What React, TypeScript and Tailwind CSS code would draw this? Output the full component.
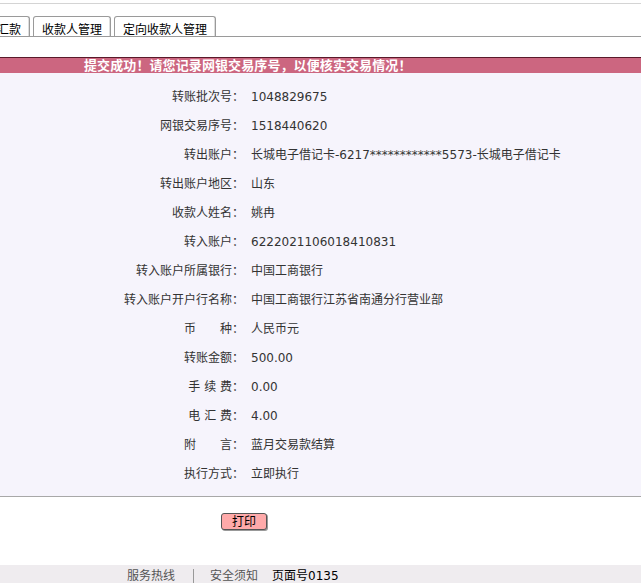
import React from 'react';

const rows: { label: string; value: string }[] = [
  { label: '转账批次号：', value: '1048829675' },
  { label: '网银交易序号：', value: '1518440620' },
  { label: '转出账户：', value: '长城电子借记卡-6217************5573-长城电子借记卡' },
  { label: '转出账户地区：', value: '山东' },
  { label: '收款人姓名：', value: '姚冉' },
  { label: '转入账户：', value: '6222021106018410831' },
  { label: '转入账户所属银行：', value: '中国工商银行' },
  { label: '转入账户开户行名称：', value: '中国工商银行江苏省南通分行营业部' },
  { label: '币\u3000\u3000种：', value: '人民币元' },
  { label: '转账金额：', value: '500.00' },
  { label: '手 续 费：', value: '0.00' },
  { label: '电 汇 费：', value: '4.00' },
  { label: '附\u3000\u3000言：', value: '蓝月交易款结算' },
  { label: '执行方式：', value: '立即执行' },
];

const tabs = ['汇款', '收款人管理', '定向收款人管理'];

export default function App() {
  return (
    <div
      className="w-[641px] h-[583px] bg-white overflow-hidden flex flex-col text-[12px] text-[#333]"
      style={{ fontFamily: '"DejaVu Sans", "Noto Sans CJK SC", sans-serif' }}
    >
      {/* top strip */}
      <div className="h-[3px] border-b border-[#d4d4d4] mt-px" />

      {/* tabs */}
      <div className="mt-[13px] flex items-end gap-[3px] border-b border-[#9a9a9a] h-[20px] -ml-[12px]">
        {tabs.map((t) => (
          <div
            key={t}
            className="h-[20px] px-[8px] pt-[7px] leading-none border border-b-0 border-[#9a9a9a] rounded-t-[3px] bg-white text-black text-[12px] shadow-[inset_1px_1px_0_#fff,inset_-1px_0_0_#ddd]"
          >
            {t}
          </div>
        ))}
      </div>

      {/* success banner */}
      <div className="mt-[20px] h-[16px] border-t border-[#5a1a2a] bg-[#cc6680] flex items-center pl-[84px] text-white font-bold text-[13px] tracking-[0.1px] leading-none">
        提交成功！请您记录网银交易序号，以便核实交易情况！
      </div>

      {/* detail table */}
      <div className="bg-[#f6f4fc] border-b border-[#a8a8a8] pt-[9px] pb-[8px]">
        {rows.map((r) => (
          <div key={r.label} className="flex items-center h-[29px]">
            <div className="w-[244px] text-right shrink-0 whitespace-pre">{r.label}</div>
            <div className="pl-[7px] whitespace-nowrap">{r.value}</div>
          </div>
        ))}
      </div>

      {/* print button */}
      <div className="pt-[16px] pl-[221px]">
        <button className="w-[46px] h-[17px] bg-[#ffaaaa] border border-[#555] rounded-[3px] text-black text-[12px] leading-none flex items-center justify-center shadow-[1px_1px_0_#999]">
          打印
        </button>
      </div>

      <div className="flex-1" />

      {/* footer */}
      <div className="h-[18px] bg-[#efecef] flex items-center pt-[4px] text-[12px] leading-none">
        <span className="ml-[127px] text-[#555]">服务热线</span>
        <span className="ml-[18px] w-px h-[14px] bg-[#999]" />
        <span className="ml-[16px] text-[#555]">安全须知</span>
        <span className="ml-[14px] text-black">页面号0135</span>
      </div>
    </div>
  );
}
